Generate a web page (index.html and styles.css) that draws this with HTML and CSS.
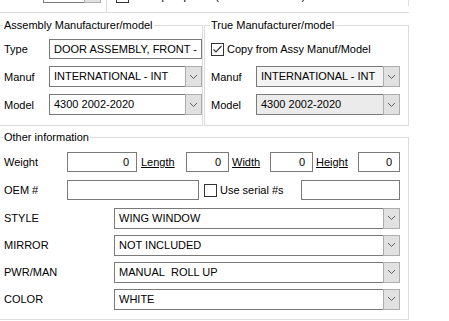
FILE: index.html
```html
<!DOCTYPE html>
<html lang="en">
<head>
  <meta charset="UTF-8">
  <meta name="viewport" content="width=device-width, initial-scale=1.0">
  <title>Part details</title>
  <link rel="stylesheet" href="styles.css">
</head>
<body>
  <div class="form">
    <div class="top">
      <div class="top-left">
        <div class="combo stub"><span class="value"></span><span class="drop"></span></div>
      </div>
      <div class="top-right">
        <span class="box"></span><span class="check-text">Make part public (show on the web)</span>
      </div>
    </div>

    <div class="pair">
      <fieldset class="group assy">
        <legend>Assembly Manufacturer/model</legend>
        <div class="rows">
          <div class="row">
            <span class="label">Type</span>
            <div class="text grow">DOOR ASSEMBLY, FRONT -</div>
          </div>
          <div class="row">
            <span class="label">Manuf</span>
            <div class="combo grow"><span class="value">INTERNATIONAL - INT</span><span class="drop"></span></div>
          </div>
          <div class="row">
            <span class="label">Model</span>
            <div class="combo grow"><span class="value">4300 2002-2020</span><span class="drop"></span></div>
          </div>
        </div>
      </fieldset>

      <fieldset class="group true">
        <legend>True Manufacturer/model</legend>
        <div class="rows">
          <div class="row">
            <span class="box checked"></span><span class="check-text">Copy from Assy Manuf/Model</span>
          </div>
          <div class="row">
            <span class="label">Manuf</span>
            <div class="combo grow light"><span class="value">INTERNATIONAL - INT</span><span class="drop"></span></div>
          </div>
          <div class="row">
            <span class="label">Model</span>
            <div class="combo grow disabled"><span class="value">4300 2002-2020</span><span class="drop"></span></div>
          </div>
        </div>
      </fieldset>
    </div>

    <fieldset class="group other">
      <legend>Other information</legend>
      <div class="rows">
        <div class="row">
          <span class="label short">Weight</span>
          <div class="text num w-weight">0</div>
          <span class="link w-length">Length</span>
          <div class="text num w-small">0</div>
          <span class="link w-width">Width</span>
          <div class="text num w-small">0</div>
          <span class="link w-height">Height</span>
          <div class="text num w-last">0</div>
        </div>
        <div class="row">
          <span class="label short">OEM #</span>
          <div class="text w-oem"></div>
          <span class="box serial"></span><span class="check-text">Use serial #s</span>
          <div class="text w-serial"></div>
        </div>
        <div class="row">
          <span class="label long">STYLE</span>
          <div class="combo grow"><span class="value">WING WINDOW</span><span class="drop"></span></div>
        </div>
        <div class="row">
          <span class="label long">MIRROR</span>
          <div class="combo grow"><span class="value">NOT INCLUDED</span><span class="drop"></span></div>
        </div>
        <div class="row">
          <span class="label long">PWR/MAN</span>
          <div class="combo grow"><span class="value">MANUAL&nbsp; ROLL UP</span><span class="drop"></span></div>
        </div>
        <div class="row">
          <span class="label long">COLOR</span>
          <div class="combo grow"><span class="value">WHITE</span><span class="drop"></span></div>
        </div>
      </div>
    </fieldset>
  </div>
</body>
</html>
```

FILE: styles.css
```css
body {
  margin: 0;
  background-color: #ffffff;
  font-family: "Liberation Sans", Arial, sans-serif;
  font-size: 11px;
  color: #000000;
  overflow: hidden;
}

.form {
  width: 412px;
  margin-left: -3px;
}

/* strip of the group above, mostly scrolled away */
.top {
  display: flex;
  height: 12px;
  border-bottom: 1px solid #dcdcdc;
  overflow: hidden;
}

.top-left {
  width: 111px;
  border-right: 1px solid #dcdcdc;
}

.top-right {
  display: flex;
  align-items: center;
  width: 299px;
  height: 20px;
  margin-top: -14px;
  padding-left: 9px;
  border-right: 1px solid #dcdcdc;
}

.combo.stub {
  width: 58px;
  height: 20px;
  margin-top: -17px;
  margin-left: 46px;
}

.pair {
  display: flex;
  margin-top: 5px;
}

.group {
  margin: 0;
  min-width: 0;
  border: 1px solid #dcdcdc;
  padding: 7px 8px 10px 6px;
}

.group legend {
  padding: 0 1px;
  margin-left: -1px;
  line-height: 14px;
}

.assy {
  width: 190px;
}

.true {
  width: 189px;
  margin-left: 1px;
}

.other {
  width: 396px;
  margin-top: 4px;
  padding-top: 8px;
}

.rows {
  display: grid;
  grid-template-rows: 20px 21px 21px;
  row-gap: 7px;
}

.other .rows {
  grid-template-rows: 21px 21px 20px 20px 20px 20px;
}

.row {
  display: flex;
  align-items: center;
}

.other .row:nth-child(-n+2) {
  align-items: flex-start;
}

.label {
  width: 45px;
  flex-shrink: 0;
}

.label.short {
  width: 63px;
  line-height: 20px;
}

.label.long {
  width: 110px;
}

.grow {
  flex: 1;
}

.text {
  box-sizing: border-box;
  height: 20px;
  border: 1px solid #7a7a7a;
  background-color: #ffffff;
  padding: 0 4px;
  line-height: 18px;
  white-space: nowrap;
  overflow: hidden;
}

.text.num {
  text-align: right;
  padding-right: 7px;
}

.w-weight { width: 70px; }
.w-small { width: 43px; }
.w-last { width: 42px; }
.w-oem { width: 132px; }
.w-serial { width: 99px; margin-left: auto; }

.link {
  text-decoration: underline;
  line-height: 20px;
  box-sizing: border-box;
}

.w-length { width: 49px; padding-left: 4px; }
.w-width { width: 41px; padding-left: 3px; }
.w-height { width: 45px; padding-left: 3px; }

.combo {
  box-sizing: border-box;
  display: flex;
  height: 21px;
}

.combo .value {
  flex: 1;
  border: 1px solid #7a7a7a;
  border-right: none;
  background-color: #ffffff;
  padding: 0 4px;
  line-height: 19px;
  white-space: nowrap;
  overflow: hidden;
}

.combo.light .value {
  background-color: #f4f4f4;
}

.combo.disabled .value {
  background-color: #ebebeb;
}

.combo .drop {
  width: 15px;
  flex-shrink: 0;
  border: 1px solid #adadad;
  background-color: #e1e1e1;
  background-image: url("data:image/svg+xml;utf8,<svg xmlns='http://www.w3.org/2000/svg' width='9' height='6'><polyline points='1,1 4.5,4.5 8,1' fill='none' stroke='%23606060' stroke-width='1'/></svg>");
  background-repeat: no-repeat;
  background-position: center;
}

.box {
  box-sizing: border-box;
  width: 13px;
  height: 13px;
  flex-shrink: 0;
  border: 1px solid #333333;
  background-color: #ffffff;
}

.box.checked {
  background-image: url("data:image/svg+xml;utf8,<svg xmlns='http://www.w3.org/2000/svg' width='11' height='11'><polyline points='1.5,5.5 4,8 9.5,2' fill='none' stroke='%23333333' stroke-width='1.2'/></svg>");
  background-repeat: no-repeat;
  background-position: center;
}

.box.serial {
  margin: 4px 0 0 5px;
}

.check-text {
  margin-left: 3px;
  white-space: nowrap;
}

.other .row:nth-child(2) .check-text {
  line-height: 20px;
}
```
